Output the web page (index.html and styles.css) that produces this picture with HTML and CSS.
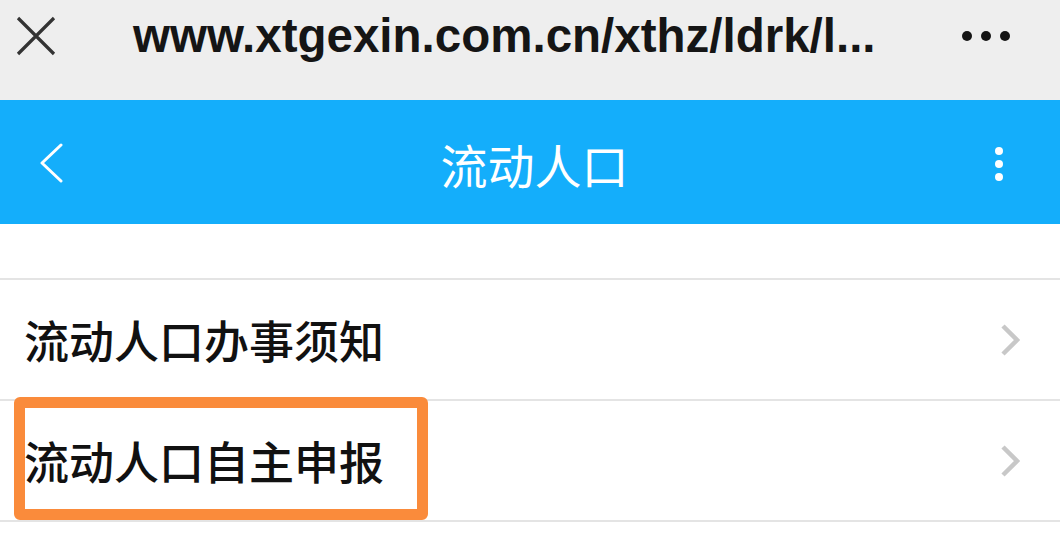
FILE: index.html
```html
<!DOCTYPE html>
<html lang="zh-CN">
<head>
<meta charset="utf-8">
<title>流动人口</title>
<link rel="stylesheet" href="styles.css">
</head>
<body>
<div class="browserbar">
  <svg class="close" width="40" height="40" viewBox="0 0 40 40"><path d="M2 2 L38 38 M38 2 L2 38" stroke="#333" stroke-width="3.2" fill="none"/></svg>
  <div class="url">www.xtgexin.com.cn/xthz/ldrk/l...</div>
  <div class="more">
    <span class="dot"></span><span class="dot"></span><span class="dot"></span>
  </div>
</div>
<div class="appbar">
  <svg class="back" width="26" height="42" viewBox="0 0 26 42"><path d="M22 2 L3 20 L22 38" stroke="#fff" stroke-width="3" fill="none" stroke-linecap="round" stroke-linejoin="round"/></svg>
  <div class="title">流动人口</div>
  <div class="vmore"><span class="vdot"></span><span class="vdot"></span><span class="vdot"></span></div>
</div>
<div class="spacer"></div>
<div class="list">
  <div class="row">
    <span class="label">流动人口办事须知</span>
    <svg class="chev" width="22" height="32" viewBox="0 0 22 32"><path d="M3 2 L17 16 L3 30" stroke="#c8c8c8" stroke-width="4.5" fill="none"/></svg>
  </div>
  <div class="row">
    <span class="label">流动人口自主申报</span>
    <svg class="chev" width="22" height="32" viewBox="0 0 22 32"><path d="M3 2 L17 16 L3 30" stroke="#c8c8c8" stroke-width="4.5" fill="none"/></svg>
    <div class="highlight"></div>
  </div>
</div>
</body>
</html>
```

FILE: styles.css
```css
* { box-sizing: border-box; }
html, body { margin: 0; padding: 0; background: #fff; }
body { width: 1060px; height: 545px; overflow: hidden; font-family: "Noto Sans CJK SC", "Liberation Sans", sans-serif; }

.browserbar {
  height: 100px;
  background: #eeeeee;
  display: flex;
  align-items: flex-start;
  position: relative;
}
.close { margin: 16px 0 0 16px; flex: none; }
.url {
  margin: 6px 0 0 77px;
  font-family: "Liberation Sans", Arial, sans-serif;
  font-weight: 700;
  font-size: 47.5px;
  line-height: 60px;
  color: #151515;
  white-space: nowrap;
}
.more {
  margin: 31px 0 0 auto;
  margin-right: 50px;
  display: flex;
  gap: 9px;
}
.dot { width: 10px; height: 10px; border-radius: 50%; background: #151515; display: block; }

.appbar {
  height: 124px;
  background: #14aefb;
  display: flex;
  align-items: center;
  position: relative;
}
.back { margin-left: 39px; flex: none; margin-top: 4px; }
.title {
  flex: 1;
  text-align: center;
  color: #fff;
  font-size: 47px;
  font-weight: 400;
  line-height: 1;
  margin-left: 9px;
  margin-top: 2px;
}
.vmore { display: flex; flex-direction: column; gap: 5px; margin-right: 57px; margin-top: 4px; }
.vdot { width: 8px; height: 8px; border-radius: 50%; background: #fff; display: block; }

.spacer { height: 56px; border-bottom: 2px solid #e4e4e4; }

.row {
  height: 121px;
  border-bottom: 2px solid #e4e4e4;
  display: flex;
  align-items: center;
  padding-left: 24px;
  position: relative;
}
.label {
  font-size: 45px;
  font-weight: 500;
  color: #111;
  line-height: 1;
  flex: 1;
}
.chev { margin-right: 38px; flex: none; }

.highlight {
  position: absolute;
  left: 14px;
  top: -4px;
  width: 414px;
  height: 123px;
  border: 11px solid #fa8b3b;
  border-radius: 6px;
}
```
